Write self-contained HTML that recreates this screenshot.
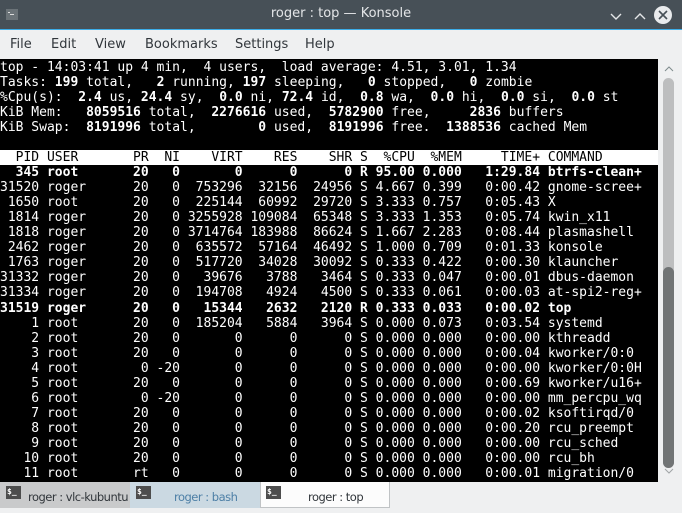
<!DOCTYPE html>
<html><head><meta charset="utf-8"><style>
*{margin:0;padding:0;box-sizing:border-box}
body{width:682px;height:513px;overflow:hidden;background:#eff0f1;font-family:"DejaVu Sans","Liberation Sans",sans-serif;position:relative}
#title{position:absolute;left:0;top:0;width:682px;height:30px;background:#475057;border-bottom:1px solid #3daee9}
#title .t{position:absolute;left:0;right:0;top:6px;text-align:center;color:#e4e6e8;font-size:13px}
#menu{position:absolute;top:30px;left:0;width:682px;height:29px;background:#eff0f1;font-size:13px;color:#31363b}
#menu span{position:absolute;top:7px}
#term{position:absolute;left:0;top:59px;width:658px;height:423px;background:#000}
pre{font-family:"DejaVu Sans Mono","Liberation Mono",monospace;font-size:13px;line-height:15.07px;color:#fff;position:absolute;left:0;top:0.5px}
b{font-weight:bold}
.hd{background:#fff;color:#000;display:inline-block;width:658px}
#sb{position:absolute;left:658px;top:59px;width:24px;height:423px;background:#eff0f1}
#tabs{position:absolute;left:0;top:482px;width:682px;height:31px;background:#eff0f1}
.tab{position:absolute;top:0;height:26px;width:130px;font-size:11.5px;letter-spacing:-0.5px;color:#31363b;white-space:nowrap}
.tab .ic{position:absolute;left:6px;top:4px;width:15px;height:13px;background:#4d4d4d;color:#fff;font-size:8px;line-height:12px;font-family:"DejaVu Sans Mono",monospace;padding-left:1px;font-weight:bold;letter-spacing:0}
.tab .tx{position:absolute;top:8px}
</style></head><body>
<div id="title"><svg style="position:absolute;left:6px;top:9px" width="12" height="11"><rect width="12" height="11" fill="#6b7378"/><rect x="2" y="3" width="2" height="1" fill="#ddd"/><rect x="4" y="5" width="4" height="1" fill="#ddd"/></svg>
<div class="t">roger : top — Konsole</div>
<svg style="position:absolute;left:608px;top:6px" width="70" height="20"><path d="M3 8 L8 13 L13 8" stroke="#e4e6e8" stroke-width="1.4" fill="none"/><path d="M27 13 L32 8 L37 13" stroke="#e4e6e8" stroke-width="1.4" fill="none"/><circle cx="55" cy="9" r="9" fill="#e9ebed"/><path d="M51 5 L59 13 M59 5 L51 13" stroke="#475057" stroke-width="1.6"/></svg>
</div>
<div id="menu"><span style="left:10px">File</span><span style="left:51px">Edit</span><span style="left:95px">View</span><span style="left:145px">Bookmarks</span><span style="left:235px">Settings</span><span style="left:305px">Help</span></div>
<div id="term"><pre>top - 14:03:41 up 4 min,  4 users,  load average: 4.51, 3.01, 1.34
Tasks: <b>199</b> total,   <b>2</b> running, <b>197</b> sleeping,   <b>0</b> stopped,   <b>0</b> zombie
%Cpu(s):  <b>2.4</b> us, <b>24.4</b> sy,  <b>0.0</b> ni, <b>72.4</b> id,  <b>0.8</b> wa,  <b>0.0</b> hi,  <b>0.0</b> si,  <b>0.0</b> st
KiB Mem:   <b>8059516</b> total,  <b>2276616</b> used,  <b>5782900</b> free,     <b>2836</b> buffers
KiB Swap:  <b>8191996</b> total,        <b>0</b> used,  <b>8191996</b> free.  <b>1388536</b> cached Mem

<span class="hd">  PID USER       PR  NI    VIRT    RES    SHR S  %CPU  %MEM     TIME+ COMMAND</span>
<b>  345 root       20   0       0      0      0 R 95.00 0.000   1:29.84 btrfs-clean+</b>
31520 roger      20   0  753296  32156  24956 S 4.667 0.399   0:00.42 gnome-scree+
 1650 root       20   0  225144  60992  29720 S 3.333 0.757   0:05.43 X
 1814 roger      20   0 3255928 109084  65348 S 3.333 1.353   0:05.74 kwin_x11
 1818 roger      20   0 3714764 183988  86624 S 1.667 2.283   0:08.44 plasmashell
 2462 roger      20   0  635572  57164  46492 S 1.000 0.709   0:01.33 konsole
 1763 roger      20   0  517720  34028  30092 S 0.333 0.422   0:00.30 klauncher
31332 roger      20   0   39676   3788   3464 S 0.333 0.047   0:00.01 dbus-daemon
31334 roger      20   0  194708   4924   4500 S 0.333 0.061   0:00.03 at-spi2-reg+
<b>31519 roger      20   0   15344   2632   2120 R 0.333 0.033   0:00.02 top</b>
    1 root       20   0  185204   5884   3964 S 0.000 0.073   0:03.54 systemd
    2 root       20   0       0      0      0 S 0.000 0.000   0:00.00 kthreadd
    3 root       20   0       0      0      0 S 0.000 0.000   0:00.04 kworker/0:0
    4 root        0 -20       0      0      0 S 0.000 0.000   0:00.00 kworker/0:0H
    5 root       20   0       0      0      0 S 0.000 0.000   0:00.69 kworker/u16+
    6 root        0 -20       0      0      0 S 0.000 0.000   0:00.00 mm_percpu_wq
    7 root       20   0       0      0      0 S 0.000 0.000   0:00.02 ksoftirqd/0
    8 root       20   0       0      0      0 S 0.000 0.000   0:00.20 rcu_preempt
    9 root       20   0       0      0      0 S 0.000 0.000   0:00.00 rcu_sched
   10 root       20   0       0      0      0 S 0.000 0.000   0:00.00 rcu_bh
   11 root       rt   0       0      0      0 S 0.000 0.000   0:00.01 migration/0</pre></div>
<div id="sb"><svg width="24" height="423"><path d="M7 12 L11 8 L15 12" stroke="#7f8c8d" stroke-width="1" fill="none"/><rect x="5" y="19" width="11" height="390" rx="5.5" fill="#bdbebf"/><rect x="5" y="208" width="11" height="201" rx="5.5" fill="#717475"/><path d="M7 410 L11 414 L15 410" stroke="#a0a4a6" stroke-width="1" fill="none"/></svg></div>
<div id="tabs">
<div class="tab" style="left:0;background:#c9cacb"><div class="ic">$_</div><div class="tx" style="left:28px">roger : vlc-kubuntu</div></div>
<div class="tab" style="left:130px;background:#cbd9e2;color:#4d7fa6"><div class="ic">$_</div><div class="tx" style="left:44px">roger : bash</div></div>
<div class="tab" style="left:260px;background:#fcfcfc;border:1px solid #c0c3c5;border-top:none;width:130px"><div class="ic" style="left:5px">$_</div><div class="tx" style="left:47px">roger : top</div></div>
</div>
</body></html>
